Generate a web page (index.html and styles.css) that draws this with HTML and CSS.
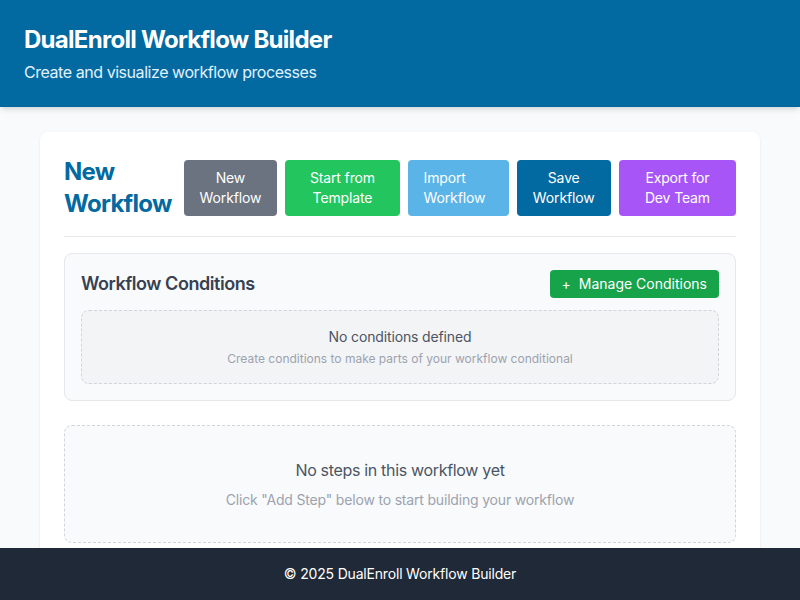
FILE: index.html
```html
<!DOCTYPE html>
<html lang="en">
<head>
<meta charset="utf-8">
<title>DualEnroll Workflow Builder</title>
<link rel="stylesheet" href="styles.css">
</head>
<body>
<header class="app-header">
  <h1 class="app-title">DualEnroll Workflow Builder</h1>
  <p class="app-subtitle">Create and visualize workflow processes</p>
</header>
<main class="main">
  <section class="card">
    <div class="card-head">
      <h2 class="wf-title">New Workflow</h2>
      <div class="actions">
        <button class="btn btn-gray">New Workflow</button>
        <button class="btn btn-green">Start from Template</button>
        <label class="btn btn-sky btn-label">Import Workflow</label>
        <button class="btn btn-blue">Save Workflow</button>
        <button class="btn btn-purple">Export for Dev Team</button>
      </div>
    </div>
    <div class="conditions">
      <div class="cond-head">
        <h3 class="cond-title">Workflow Conditions</h3>
        <button class="btn-manage"><span class="plus">+</span> Manage Conditions</button>
      </div>
      <div class="cond-empty">
        <p class="cond-empty-title">No conditions defined</p>
        <p class="cond-empty-sub">Create conditions to make parts of your workflow conditional</p>
      </div>
    </div>
    <div class="steps-empty">
      <p class="steps-title">No steps in this workflow yet</p>
      <p class="steps-sub">Click "Add Step" below to start building your workflow</p>
    </div>
    <div class="spacer"></div>
  </section>
</main>
<footer class="app-footer">© 2025 DualEnroll Workflow Builder</footer>
</body>
</html>
```
FILE: styles.css
```css
* { box-sizing: border-box; }
html, body { margin: 0; padding: 0; }
body {
  font-family: Inter, "Liberation Sans", sans-serif;
  background: #f9fafb;
  color: #1f2937;
}
p, h1, h2, h3 { margin: 0; }

.app-header {
  background: #0369a1;
  color: #fff;
  padding: 24px 24px 23px;
  box-shadow: 0 4px 6px -1px rgba(0,0,0,0.1), 0 2px 4px -2px rgba(0,0,0,0.1);
  position: relative;
}
.app-title { font-size: 24px; line-height: 32px; font-weight: 700; letter-spacing: -0.03em; }
.app-subtitle { font-size: 16px; line-height: 24px; margin-top: 4px; color: #e0f2fe; letter-spacing: -0.028em; }

.main { padding: 25px 40px 80px; }
.card {
  background: #fff;
  border-radius: 8px;
  box-shadow: 0 1px 3px rgba(0,0,0,0.08), 0 1px 2px -1px rgba(0,0,0,0.06);
  padding: 24px;
}
.card-head {
  display: flex;
  align-items: center;
  justify-content: space-between;
  gap: 12px;
  padding-bottom: 16px;
  border-bottom: 1px solid #e5e7eb;
  margin-bottom: 16px;
}
.wf-title {
  font-size: 24px; line-height: 32px; font-weight: 700; color: #0369a1;
  letter-spacing: -0.03em;
  width: min-content;
  flex: none;
}
.actions { display: flex; gap: 8px; flex: 1 1 auto; min-width: 0; }
.btn {
  border: 0;
  border-radius: 4px;
  color: #fff;
  font-family: inherit;
  letter-spacing: -0.01em;
  font-size: 14px;
  line-height: 20px;
  padding: 8px 16px;
  text-align: center;
  cursor: pointer;
  flex: 1 1 auto;
}
.btn-label { text-align: left; display: block; }
.btn-gray { background: #6b7280; }
.btn-green { background: #22c55e; }
.btn-sky { background: #5ab4e7; }
.btn-blue { background: #0369a1; }
.btn-purple { background: #a855f7; }

.conditions {
  background: #f9fafb;
  border: 1px solid #e5e7eb;
  border-radius: 8px;
  padding: 16px;
  margin-bottom: 24px;
}
.cond-head { display: flex; justify-content: space-between; align-items: center; margin-bottom: 12px; }
.cond-title { font-size: 18px; line-height: 28px; font-weight: 600; color: #374151; letter-spacing: -0.025em; }
.btn-manage {
  background: #16a34a;
  color: #fff;
  border: 0;
  border-radius: 4px;
  font-family: inherit;
  font-size: 14px;
  line-height: 20px;
  padding: 4px 12px;
  height: 28px;
}
.plus { margin-right: 4px; }
.cond-empty {
  background: #f3f4f6;
  border: 1px dashed #d1d5db;
  border-radius: 8px;
  padding: 16px;
  text-align: center;
}
.cond-empty-title { font-size: 14px; line-height: 20px; color: #4b5563; letter-spacing: -0.01em; }
.cond-empty-sub { font-size: 12px; line-height: 16px; color: #9ca3af; margin-top: 4px; }

.steps-empty {
  background: #f9fafb;
  border: 1px dashed #d1d5db;
  border-radius: 8px;
  padding: 32px;
  text-align: center;
}
.steps-title { font-size: 16px; line-height: 24px; color: #4b5563; letter-spacing: -0.02em; }
.steps-sub { font-size: 14px; line-height: 20px; color: #9ca3af; margin-top: 8px; letter-spacing: -0.013em; }
.spacer { height: 60px; }

.app-footer {
  position: fixed;
  left: 0; right: 0; bottom: 0;
  background: #1f2937;
  color: #fff;
  text-align: center;
  font-size: 14px;
  line-height: 20px;
  padding: 16px;
  letter-spacing: -0.013em;
}
```
